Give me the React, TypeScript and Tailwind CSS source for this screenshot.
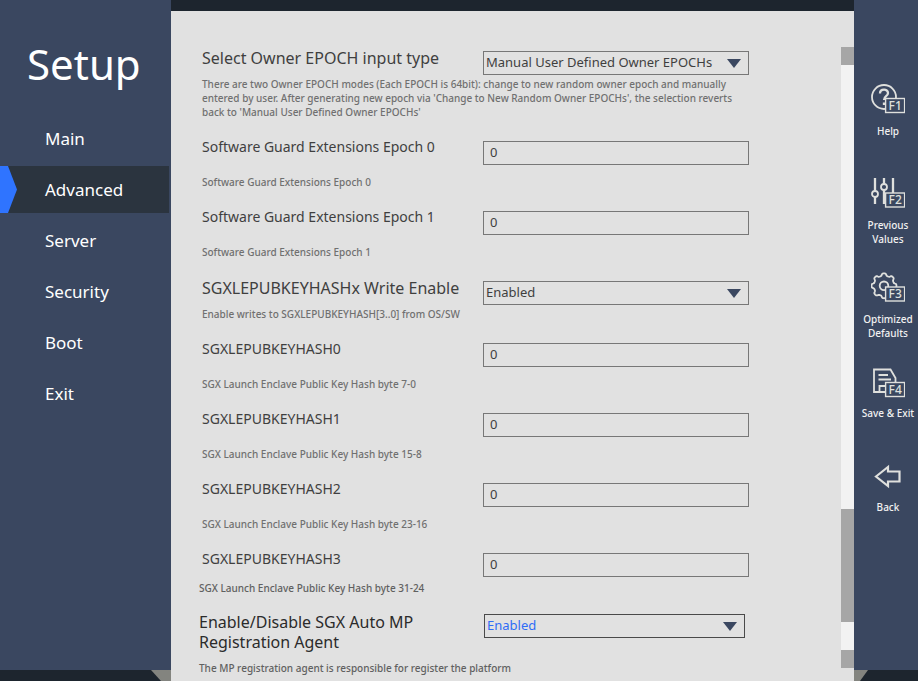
import { useState } from "react";
import type { ReactNode } from "react";

interface Field {
  id: string;
  label: string;
  help: string;
  kind: "select" | "text";
  value: string;
  options?: string[];
}

const menuItems = ["Main", "Advanced", "Server", "Security", "Boot", "Exit"];

const fields: Field[] = [
  {
    id: "epoch-type",
    label: "Select Owner EPOCH input type",
    help: "There are two Owner EPOCH modes (Each EPOCH is 64bit): change to new random owner epoch and manually entered by user. After generating new epoch via 'Change to New Random Owner EPOCHs', the selection reverts back to 'Manual User Defined Owner EPOCHs'",
    kind: "select",
    value: "Manual User Defined Owner EPOCHs",
    options: ["Manual User Defined Owner EPOCHs", "Change to New Random Owner EPOCHs"],
  },
  { id: "epoch-0", label: "Software Guard Extensions Epoch 0", help: "Software Guard Extensions Epoch 0", kind: "text", value: "0" },
  { id: "epoch-1", label: "Software Guard Extensions Epoch 1", help: "Software Guard Extensions Epoch 1", kind: "text", value: "0" },
  {
    id: "hash-write",
    label: "SGXLEPUBKEYHASHx Write Enable",
    help: "Enable writes to SGXLEPUBKEYHASH[3..0] from OS/SW",
    kind: "select",
    value: "Enabled",
    options: ["Enabled", "Disabled"],
  },
  { id: "hash-0", label: "SGXLEPUBKEYHASH0", help: "SGX Launch Enclave Public Key Hash byte 7-0", kind: "text", value: "0" },
  { id: "hash-1", label: "SGXLEPUBKEYHASH1", help: "SGX Launch Enclave Public Key Hash byte 15-8", kind: "text", value: "0" },
  { id: "hash-2", label: "SGXLEPUBKEYHASH2", help: "SGX Launch Enclave Public Key Hash byte 23-16", kind: "text", value: "0" },
];

const DropDown = ({ id, value, options, active }: { id: string; value: string; options: string[]; active?: boolean }) => (
  <div className="grid grid-cols-1 items-center">
    <select
      id={id}
      defaultValue={value}
      className={`col-start-1 row-start-1 h-6 w-full appearance-none border pb-0.5 pl-0.5 text-[13px] leading-5 outline-none ${
        active ? "border-[#4a4a4a] text-[#2f6df6]" : "border-[#777777] text-[#3f3f3f]"
      }`}
    >
      {options.map(option => (
        <option key={option}>{option}</option>
      ))}
    </select>
    <svg viewBox="0 0 14 9" className="pointer-events-none col-start-1 row-start-1 mr-2 h-[9px] w-3.5 justify-self-end" fill="#3a4760">
      <path d="M0 0h14L7 9z" />
    </svg>
  </div>
);

const TextBox = ({ id, value }: { id: string; value: string }) => (
  <input
    id={id}
    type="text"
    defaultValue={value}
    className="block h-6 w-full border border-[#777777] pb-0.5 pl-1.5 text-[13px] leading-5 text-[#3f3f3f] outline-none"
  />
);

const FieldRow = ({ field }: { field: Field }) => {
  const isSelect = field.kind === "select";
  return (
    <div className="pb-[18px] pl-[3px]">
      <div className={`grid grid-cols-[281px_266px] items-start ${isSelect ? "h-[30px]" : "h-[38px]"}`}>
        <label htmlFor={field.id} className={isSelect ? "text-base leading-[22px]" : "text-sm leading-5"}>
          {field.label}
        </label>
        <div className="pt-1">
          {isSelect ? (
            <DropDown id={field.id} value={field.value} options={field.options ?? []} />
          ) : (
            <TextBox id={field.id} value={field.value} />
          )}
        </div>
      </div>
      <p className="max-w-[540px] text-[10px] leading-[14px] font-medium text-[#707070]">{field.help}</p>
    </div>
  );
};

/* Key cap drawn over the lower right corner of an action icon */
const KeyCap = ({ name, y = 15 }: { name: string; y?: number }) => (
  <>
    <rect x="14.6" y={y} width="19" height="14" fill="#3a4760" stroke="#dfe0dd" strokeWidth="1.4" />
    <text
      x="24.2"
      y={y + 11.3}
      textAnchor="middle"
      fontSize="12"
      fontWeight="500"
      fill="#dfe0dd"
      stroke="none"
      fontFamily="Noto Sans, sans-serif"
    >
      {name}
    </text>
  </>
);

const ActionIcon = ({ children }: { children: ReactNode }) => (
  <svg viewBox="0 0 34 32" className="h-8 w-[34px]" fill="none" stroke="#dfe0dd" strokeWidth="1.8">
    {children}
  </svg>
);

// Outline of the gear: eight rounded teeth around its centre
const gearPoints = Array.from({ length: 120 }, (_, i) => {
  const angle = (i / 120) * Math.PI * 2;
  const radius = 11.3 + 1.2 * Math.tanh(2 * Math.cos(8 * angle));
  return `${(13 + radius * Math.sin(angle)).toFixed(2)},${(13.8 - radius * Math.cos(angle)).toFixed(2)}`;
}).join(" ");

const actions = [
  {
    lines: ["Help"],
    icon: (
      <ActionIcon>
        <circle cx="13" cy="13" r="12" />
        <path d="M9 9.500c0-5 8-5 8-.5 0 3.500-4 3-4 7M13 18.500V21" strokeWidth="2.300" />
        <KeyCap name="F1" y={14.5} />
      </ActionIcon>
    ),
  },
  {
    lines: ["Previous", "Values"],
    icon: (
      <ActionIcon>
        <path d="M4 0v13M4 19v7M13 0v6M13 12v14M22 0v15" strokeWidth="2.300" />
        <circle cx="4" cy="16" r="3" />
        <circle cx="13" cy="9" r="3" />
        <KeyCap name="F2" />
      </ActionIcon>
    ),
  },
  {
    lines: ["Optimized", "Defaults"],
    icon: (
      <ActionIcon>
        <polygon points={gearPoints} strokeLinejoin="round" />
        <circle cx="13" cy="13.800" r="4.300" />
        <KeyCap name="F3" />
      </ActionIcon>
    ),
  },
  {
    lines: ["Save & Exit"],
    icon: (
      <ActionIcon>
        <path d="M3 3.500h16.500L24.500 12v14H3zM7.500 9h9.500M7.500 13.500H20M8.500 26v-6H16" />
        <KeyCap name="F4" y={16.5} />
      </ActionIcon>
    ),
  },
  {
    lines: ["Back"],
    icon: (
      <ActionIcon>
        <path d="M5 16.500 17 7v4.500h11.500v10H17V26z" strokeWidth="2.200" />
      </ActionIcon>
    ),
  },
];

const App = () => {
  const [current, setCurrent] = useState("Advanced");

  return (
    <div className="flex h-screen overflow-hidden bg-[#1d252e] font-['Noto_Sans',sans-serif] text-[#3f3f3f]">
      {/* Menu */}
      <aside className="flex w-[171px] shrink-0 flex-col">
        <div className="flex-1 bg-[#3a4760] text-white">
          <h1 className="pt-9 pl-[27px] text-[42px] leading-[56px]">Setup</h1>
          <nav className="mt-[23px] flex flex-col gap-1">
            {menuItems.map(item => (
              <button
                key={item}
                type="button"
                onClick={() => setCurrent(item)}
                className={`mr-0.5 flex h-[47px] items-center text-left text-[17px] ${item === current ? "bg-[#2b343f]" : ""}`}
              >
                <svg viewBox="0 0 17 47" className={`mr-7 h-[47px] w-[17px] ${item === current ? "" : "invisible"}`} fill="#2f74ff">
                  <path d="M0 0h8l9 23.500L8 47H0z" />
                </svg>
                {item}
              </button>
            ))}
          </nav>
        </div>
        <div className="flex h-[11px] justify-end">
          <svg viewBox="0 0 20 11" className="h-[11px] w-5" fill="#83847f">
            <path d="M0 0h20v11H10z" />
          </svg>
        </div>
      </aside>

      {/* Settings */}
      <div className="flex min-w-0 flex-1 flex-col pt-[11px]">
        <main className="flex min-h-0 flex-1 overflow-hidden bg-[#e1e1e1] pt-9">
          <div className="min-w-0 flex-1 pl-7">
            {fields.map(field => (
              <FieldRow key={field.id} field={field} />
            ))}
            <div className="pb-[17px]">
              <div className="grid h-8 grid-cols-[284px_266px] items-start">
                <label htmlFor="hash-3" className="pl-[3px] text-sm leading-5">
                  SGXLEPUBKEYHASH3
                </label>
                <div className="pt-1">
                  <TextBox id="hash-3" value="0" />
                </div>
              </div>
              <p className="text-[10px] leading-[14px] font-medium text-[#606060]">SGX Launch Enclave Public Key Hash byte 31-24</p>
            </div>
            <div className="grid grid-cols-[285px_261px] items-start">
              <label htmlFor="mp-agent" className="max-w-60 text-base leading-5 text-[#2b2b2b]">
                Enable/Disable SGX Auto MP Registration Agent
              </label>
              <div className="pt-0.5">
                <DropDown id="mp-agent" value="Enabled" options={["Enabled", "Disabled"]} active />
              </div>
            </div>
            <p className="pt-[9px] text-[10px] leading-[14px] font-medium text-[#606060]">
              The MP registration agent is responsible for register the platform
            </p>
          </div>
          <div className="mb-[13px] flex w-[13px] shrink-0 flex-col bg-[#f2f2f2]">
            <div className="h-[18px] bg-[#a6a6a6]" />
            <div className="flex flex-1 flex-col justify-end">
              <div className="mb-7 h-[113px] bg-[#a6a6a6]" />
            </div>
            <div className="h-[18px] bg-[#a6a6a6]" />
          </div>
        </main>
      </div>

      {/* Function keys */}
      <aside className="flex w-16 shrink-0 flex-col">
        <div className="flex flex-1 flex-col bg-[#3a4760] pt-[84px]">
          {actions.map(action => (
            <button
              key={action.lines[0]}
              type="button"
              className="flex h-[94px] flex-col items-center gap-2 pl-1 text-[10px] leading-[14px] font-medium text-[#f1f1f1]"
            >
              {action.icon}
              <span>
                {action.lines.map(line => (
                  <span key={line} className="block whitespace-nowrap">
                    {line}
                  </span>
                ))}
              </span>
            </button>
          ))}
        </div>
        <svg viewBox="0 0 14 11" className="h-[11px] w-3.5" fill="#83847f">
          <path d="M0 0h14L6 11H0z" />
        </svg>
      </aside>
    </div>
  );
};

export default App;
